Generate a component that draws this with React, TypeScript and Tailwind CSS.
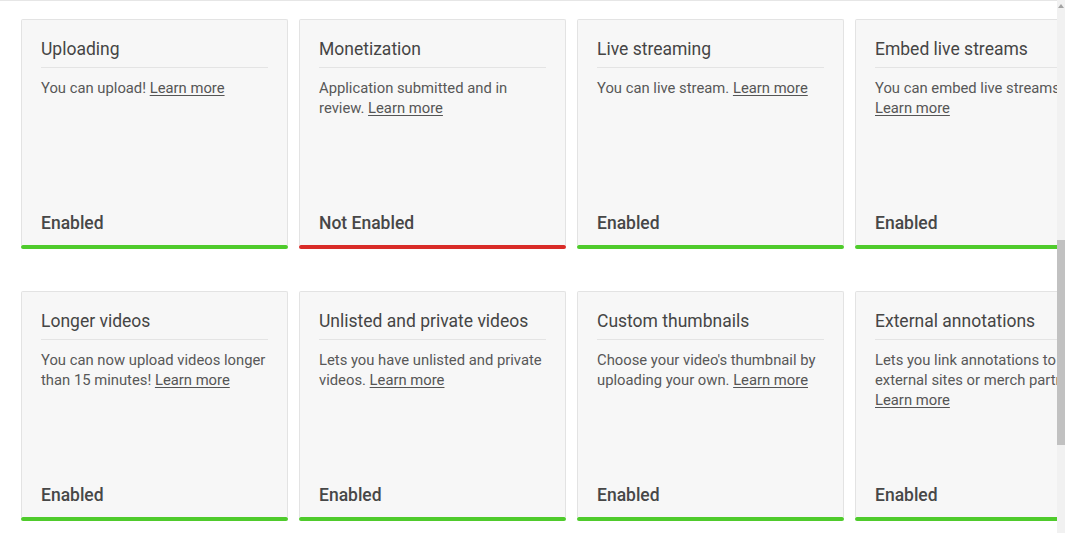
type Feature = {
  title: string;
  text: string;
  enabled: boolean;
};

const rows: Feature[][] = [
  [
    { title: 'Uploading', text: 'You can upload!', enabled: true },
    { title: 'Monetization', text: 'Application submitted and in review.', enabled: false },
    { title: 'Live streaming', text: 'You can live stream.', enabled: true },
    { title: 'Embed live streams', text: 'You can embed live streams.', enabled: true },
  ],
  [
    { title: 'Longer videos', text: 'You can now upload videos longer than 15 minutes!', enabled: true },
    { title: 'Unlisted and private videos', text: 'Lets you have unlisted and private videos.', enabled: true },
    { title: 'Custom thumbnails', text: "Choose your video's thumbnail by uploading your own.", enabled: true },
    { title: 'External annotations', text: 'Lets you link annotations to external sites or merch partners.', enabled: true },
  ],
];

function FeatureCard({ feature }: { feature: Feature }) {
  return (
    <div className="flex h-[230px] w-[267px] shrink-0 flex-col">
      <div className="flex flex-1 flex-col rounded-t-[2px] border border-b-0 border-[#e3e3e3] bg-[#f7f7f7] px-[19px]">
        <h3 className="border-b border-[#e4e4e4] pt-[17px] pb-[6px] text-[17.5px] leading-[24px] font-normal text-[#454545]">
          {feature.title}
        </h3>
        <p className="mt-[10px] text-[14.8px] leading-[20px] text-[#585858]">
          {feature.text}{' '}
          <a href="#" className="whitespace-nowrap text-[#555] underline underline-offset-2">
            Learn more
          </a>
        </p>
        <div className="mt-auto pb-[10px] text-[17.5px] leading-[24px] font-medium text-[#474747]">
          {feature.enabled ? 'Enabled' : 'Not Enabled'}
        </div>
      </div>
      <div
        className={
          feature.enabled
            ? 'h-[4px] rounded-[2px] bg-[#4fcb2c]'
            : 'h-[4px] rounded-[2px] bg-[#d92c28]'
        }
      />
    </div>
  );
}

export default function App() {
  return (
    <div
      className="flex h-[533px] w-[1065px] overflow-hidden bg-white"
      style={{ fontFamily: 'Roboto, "Noto Sans", sans-serif' }}
    >
      <main className="min-w-0 flex-1 overflow-hidden border-t border-[#e6e6e6] pt-[18px] pl-[21px]">
        <div className="flex flex-col gap-[42px]">
          {rows.map((row, i) => (
            <div key={i} className="flex gap-[11px]">
              {row.map((f) => (
                <FeatureCard key={f.title} feature={f} />
              ))}
            </div>
          ))}
        </div>
      </main>

      <div className="flex w-[8px] flex-col bg-[#f1f1f1]">
        <div className="flex h-[10px] items-start justify-center pt-[4px]">
          <div className="h-0 w-0 border-x-[3px] border-b-[4px] border-x-transparent border-b-[#a3a3a3]" />
        </div>
        <div className="h-[230px]" />
        <div className="h-[205px] bg-[#c1c1c1]" />
      </div>
    </div>
  );
}
